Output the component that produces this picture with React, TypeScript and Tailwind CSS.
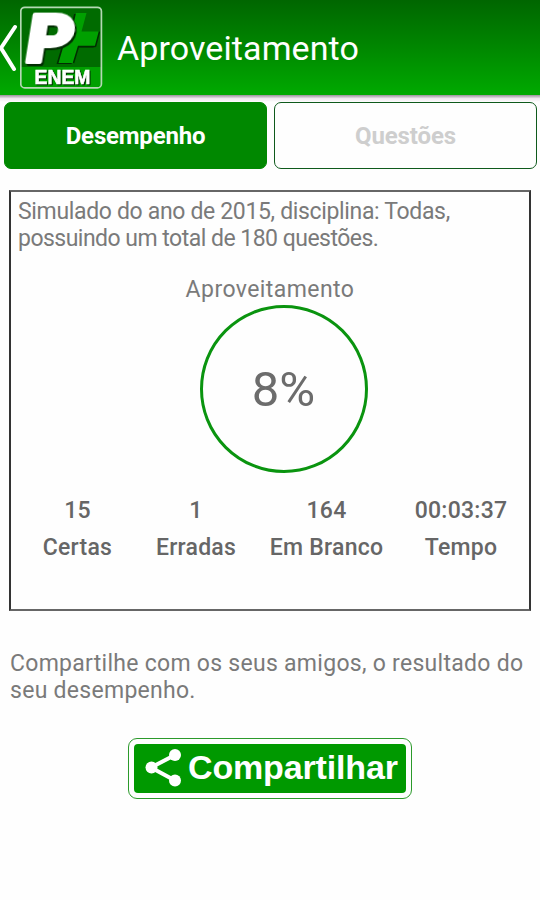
import { useState } from "react";

type Tab = "desempenho" | "questoes";

const TABS: { id: Tab; label: string }[] = [
  { id: "desempenho", label: "Desempenho" },
  { id: "questoes", label: "Questões" },
];

const STATS = [
  { value: "15", label: "Certas", width: "w-[133px]" },
  { value: "1", label: "Erradas", width: "w-[104px]" },
  { value: "164", label: "Em Branco", width: "w-[157px]" },
  { value: "00:03:37", label: "Tempo", width: "w-[112px]" },
];

function BackIcon() {
  return (
    <svg width="20" height="95" viewBox="0 0 20 95" fill="none">
      <path d="M15 27 L1 48 L14 69" stroke="#fff" strokeWidth="4" strokeLinecap="round" />
    </svg>
  );
}

function Logo() {
  return (
    <svg width="83" height="83" viewBox="20 6 83 83">
      <rect x="20.5" y="7" width="81" height="81" rx="3.5" fill="#006b00" />
      <rect x="21" y="67" width="80" height="20.500" fill="#00a000" />
      {/* plus sign with its drop shadow */}
      <path
        d="M76 13 H86.500 L81.500 31.500 H99.500 L95.500 46.500 H78.500 L73.500 63 H58.500 L63.500 46 H58 L61 31 H72 Z"
        fill="#00a000"
        className="drop-shadow-[-1.5px_1.5px_0.5px_#012d01]"
      />
      <path d="M95.500 46.500 H78.500 L73.500 63 M99.500 31.500 L95.500 46.500" fill="none" stroke="#012d01" strokeWidth="1.500" />
      <text
        transform="translate(23.500 62) skewX(-9)"
        textLength="47"
        lengthAdjust="spacingAndGlyphs"
        fontFamily="Roboto, sans-serif"
        fontWeight="900"
        fontSize="66"
        fill="#fff"
        stroke="#fff"
        strokeWidth="4"
        strokeLinejoin="round"
        className="drop-shadow-[2px_2px_0.5px_#012d01]"
      >
        P
      </text>
      <text
        x="34.500"
        y="83.500"
        textLength="56"
        lengthAdjust="spacingAndGlyphs"
        fontFamily="Liberation Sans, sans-serif"
        fontWeight="700"
        fontSize="20"
        fill="#fff"
        stroke="#fff"
        strokeWidth="0.6"
        className="drop-shadow-[1px_1px_0.5px_#012d01]"
      >
        ENEM
      </text>
      <rect x="20.800" y="7.300" width="80.600" height="80.600" rx="4" fill="none" stroke="#b4d8b4" strokeWidth="1.700" />
    </svg>
  );
}

function ShareIcon() {
  return (
    <svg width="38" height="40" viewBox="0 0 38 40" fill="#fff">
      <path d="M30 7 L6 19.500 L30 32.500" fill="none" stroke="#fff" strokeWidth="4" />
      <circle cx="30" cy="7" r="6" />
      <circle cx="6.500" cy="19.500" r="6" />
      <circle cx="30" cy="32.500" r="6" />
    </svg>
  );
}

export default function App() {
  const [tab, setTab] = useState<Tab>("desempenho");

  return (
    <div className="w-[540px] h-[900px] bg-[#fefefe] overflow-hidden font-[Roboto,sans-serif] text-[#7a7a7a]">
      <header className="h-[95px] flex items-center bg-linear-to-b from-[#006600] to-[#00aa00]">
        <BackIcon />
        <Logo />
        <h1 className="ml-[14px] text-[34px] leading-[40px] tracking-[0.1px] text-white">Aproveitamento</h1>
      </header>
      <div className="h-[7px] bg-linear-to-b from-[#999199] via-[#eee8ee] to-[#fefefe]" />

      <nav className="flex gap-[7px] pl-1 pr-[3px]">
        {TABS.map((t) => (
          <button
            key={t.id}
            onClick={() => setTab(t.id)}
            className={
              tab === t.id
                ? "flex-1 h-[67px] rounded-[7px] bg-[#008800] border border-[#008800] text-[24px] tracking-[-0.2px] font-bold text-white"
                : "flex-1 h-[67px] rounded-[7px] bg-[#fefefe] border-[1.5px] border-[#0f5a1c] text-[24px] tracking-[-0.1px] font-bold text-[#cecece]"
            }
          >
            {t.label}
          </button>
        ))}
      </nav>

      <section className="mt-[21px] ml-[9px] w-[522px] h-[421px] border-2 border-[#666] border-x-[#333]">
        <p className="pt-[6px] pl-[7px] text-[23px] leading-[27px] tracking-[-0.34px] whitespace-nowrap">
          Simulado do ano de 2015, disciplina: Todas,
          <br />
          <span className="tracking-[-0.52px]">possuindo um total de 180 questões.</span>
        </p>
        <div className="mt-[24px] flex flex-col items-center">
          <span className="text-[23px] leading-[28px] tracking-[0.43px]">Aproveitamento</span>
          <div className="mt-px ml-[27px] size-[168px] rounded-full border-[3px] border-[#0a940f] flex items-center justify-center pt-[2px] text-[49px] text-[#6c6c6c]">
            8%
          </div>
        </div>
        <div className="mt-[24px] flex text-[23px] font-medium tracking-[0.25px] text-[#666]">
          {STATS.map((s) => (
            <div key={s.label} className={`${s.width} shrink-0 flex flex-col items-center gap-[10px] leading-[27px] whitespace-nowrap`}>
              <span>{s.value}</span>
              <span>{s.label}</span>
            </div>
          ))}
        </div>
      </section>

      <p className="mt-[39px] pl-[10px] text-[23px] leading-[27px] tracking-[0.28px] whitespace-nowrap">
        Compartilhe com os seus amigos, o resultado do
        <br />
        seu desempenho.
      </p>

      <button className="mt-[34px] ml-[128px] w-[284px] h-[61px] p-[5px] rounded-[9px] border-[1.5px] border-[#2b9a2b] flex">
        <span className="flex-1 h-full flex items-center rounded-[4px] bg-[#009900] pl-[11px] pb-[2px] text-white">
          <ShareIcon />
          <span className="ml-[5px] -mt-[2px] font-['Liberation_Sans',sans-serif] font-bold text-[34px] leading-[40px] tracking-[-0.15px]">Compartilhar</span>
        </span>
      </button>
    </div>
  );
}
